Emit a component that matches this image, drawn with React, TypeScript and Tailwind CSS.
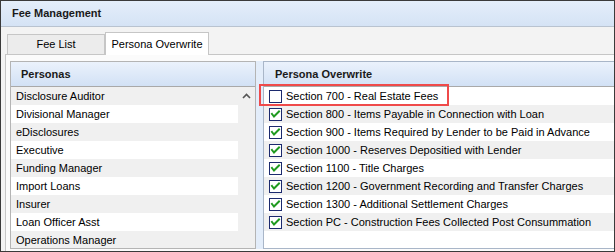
import React from "react";

const personas = [
  "Disclosure Auditor",
  "Divisional Manager",
  "eDisclosures",
  "Executive",
  "Funding Manager",
  "Import Loans",
  "Insurer",
  "Loan Officer Asst",
  "Operations Manager",
];

const sections: { label: string; checked: boolean }[] = [
  { label: "Section 700 - Real Estate Fees", checked: false },
  { label: "Section 800 - Items Payable in Connection with Loan", checked: true },
  { label: "Section 900 - Items Required by Lender to be Paid in Advance", checked: true },
  { label: "Section 1000 - Reserves Depositied with Lender", checked: true },
  { label: "Section 1100 - Title Charges", checked: true },
  { label: "Section 1200 - Government Recording and Transfer Charges", checked: true },
  { label: "Section 1300 - Additional Settlement Charges", checked: true },
  { label: "Section PC - Construction Fees Collected Post Consummation", checked: true },
];

function CheckBox({ checked }: { checked: boolean }) {
  return (
    <svg width="13" height="13" viewBox="0 0 13 13" className="shrink-0">
      <rect x="0.5" y="0.5" width="12" height="12" fill="#ffffff" stroke="#1c2a6e" />
      {checked && (
        <path d="M3 6 L5 8.5 L10 3.5" fill="none" stroke="#1f9a1f" strokeWidth="2" strokeLinecap="square" />
      )}
    </svg>
  );
}

export default function App() {
  return (
    <div
      className="w-[615px] h-[252px] border border-[#3a3a3a] flex flex-col bg-[#f3f3f3] text-[11px] text-black overflow-hidden"
      style={{ fontFamily: '"Liberation Sans", Arial, sans-serif' }}
    >
      {/* Title bar */}
      <div className="h-[26px] shrink-0 border-b border-[#b9c3d0] bg-gradient-to-b from-[#e4eefa] to-[#d5e3f5] flex items-center pl-[11px] font-bold text-[#1a1a1a]">
        Fee Management
      </div>

      {/* Tab strip */}
      <div className="h-[27px] shrink-0 flex items-end pl-[6px] relative z-10">
        <div className="w-[98px] h-[20px] border border-b-0 border-[#c6c6c6] bg-[#ececec] flex items-center justify-center">
          Fee List
        </div>
        <div className="w-[104px] h-[23px] -mb-px border border-b-0 border-[#c6c6c6] bg-white flex items-center justify-center">
          Persona Overwrite
        </div>
      </div>

      {/* Content */}
      <div className="flex-1 min-h-0 ml-[4px] border-l border-t border-[#c6c6c6] bg-[#fbfbfb] pt-[6px] pl-[4px] pb-[2px] flex">
        {/* Personas panel */}
        <div className="w-[246px] shrink-0 border border-[#b4b4b4] flex flex-col bg-white overflow-hidden">
          <div className="h-[25px] shrink-0 border-b border-[#a9a9a9] bg-gradient-to-b from-[#ebf2fc] to-[#d2e1f5] flex items-center pl-[10px] font-bold text-[#1a1a1a]">
            Personas
          </div>
          <div className="flex-1 min-h-0 flex">
            <div className="flex-1 flex flex-col">
              {personas.map((p, i) => (
                <div
                  key={p}
                  className={`h-[18px] shrink-0 flex items-center pl-[5px] ${i % 2 === 0 ? "bg-[#f0f0f0]" : "bg-white"}`}
                >
                  {p}
                </div>
              ))}
            </div>
            <div className="w-[17px] shrink-0 bg-[#f0f0f0] flex justify-center pt-[6px]">
              <svg width="9" height="6" viewBox="0 0 9 6">
                <path d="M1 5 L4.5 1.5 L8 5" fill="none" stroke="#555555" strokeWidth="1.6" />
              </svg>
            </div>
          </div>
        </div>

        {/* Splitter */}
        <div className="w-[7px] shrink-0 bg-[#e3edfa]" />

        {/* Persona Overwrite panel */}
        <div className="flex-1 border-l border-t border-b border-[#a9b6c8] flex flex-col bg-white relative">
          <div className="h-[25px] shrink-0 border-b border-[#a9a9a9] bg-gradient-to-b from-[#ebf2fc] to-[#d2e1f5] flex items-center pl-[11px] font-bold text-[#1a1a1a]">
            Persona Overwrite
          </div>
          <div className="flex-1 flex flex-col">
            {sections.map((s, i) => (
              <div
                key={s.label}
                className={`h-[18px] shrink-0 flex items-center pl-[5px] gap-[4px] ${i % 2 === 0 ? "bg-white" : "bg-[#f0f0f0]"}`}
              >
                <CheckBox checked={s.checked} />
                <span>{s.label}</span>
              </div>
            ))}
          </div>
          <div className="absolute left-[-5px] top-[22px] w-[190px] h-[22px] border-2 border-[#ef4a4a] pointer-events-none" />
        </div>
      </div>
    </div>
  );
}
